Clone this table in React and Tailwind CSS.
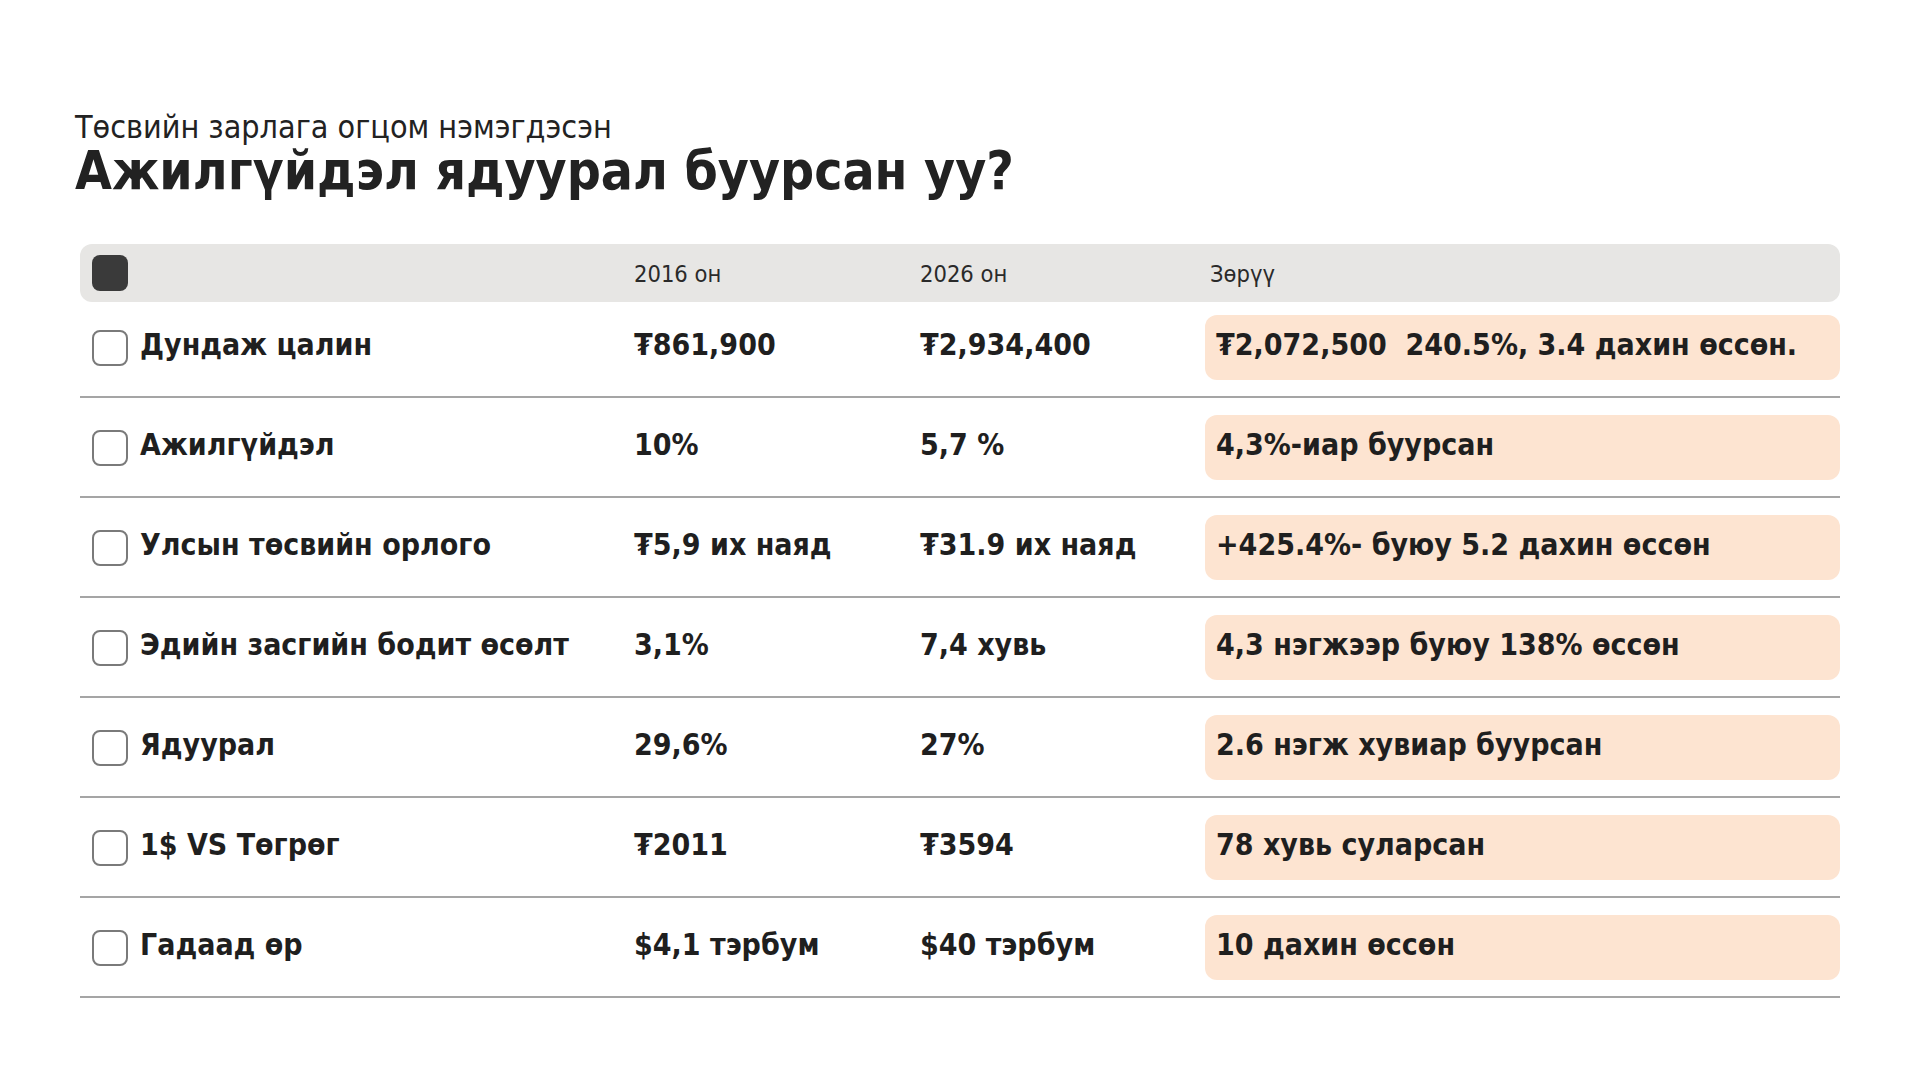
import React from 'react';

const rows = [
  { label: 'Дундаж цалин', y2016: '₮861,900', y2026: '₮2,934,400', diff: '₮2,072,500  240.5%, 3.4 дахин өссөн.' },
  { label: 'Ажилгүйдэл', y2016: '10%', y2026: '5,7 %', diff: '4,3%-иар буурсан' },
  { label: 'Улсын төсвийн орлого', y2016: '₮5,9 их наяд', y2026: '₮31.9 их наяд', diff: '+425.4%- буюу 5.2 дахин өссөн' },
  { label: 'Эдийн засгийн бодит өсөлт', y2016: '3,1%', y2026: '7,4 хувь', diff: '4,3 нэгжээр буюу 138% өссөн' },
  { label: 'Ядуурал', y2016: '29,6%', y2026: '27%', diff: '2.6 нэгж хувиар буурсан' },
  { label: '1$ VS Төгрөг', y2016: '₮2011', y2026: '₮3594', diff: '78 хувь суларсан' },
  { label: 'Гадаад өр', y2016: '$4,1 тэрбум', y2026: '$40 тэрбум', diff: '10 дахин өссөн' },
];

const font = { fontFamily: '"DejaVu Sans Condensed", "DejaVu Sans", sans-serif' };

export default function App() {
  return (
    <div className="w-[1920px] h-[1080px] bg-white text-[#1f1f1f] overflow-hidden" style={font}>
      <div className="pt-[111px] pl-[75px]">
        <p className="text-[32px] leading-none text-[#222]">Төсвийн зарлага огцом нэмэгдэсэн</p>
        <h1 className="mt-[1px] text-[53px] leading-none font-bold text-[#222]">Ажилгүйдэл ядуурал буурсан уу?</h1>
      </div>

      <div className="ml-[80px] mt-[47px] w-[1760px]">
        {/* header */}
        <div className="grid grid-cols-[542px_286px_285px_1fr] items-center h-[58px] pl-3 bg-[#e7e6e4] rounded-xl text-[23.5px] text-[#2a2a2a]">
          <div>
            <div className="w-9 h-9 rounded-lg bg-[#3a3a3a]"></div>
          </div>
          <div className="pt-[3px]">2016 он</div>
          <div className="pt-[3px]">2026 он</div>
          <div className="pt-[3px] pl-[5px]">Зөрүү</div>
        </div>

        {/* rows */}
        {rows.map((r, i) => (
          <div
            key={r.label}
            className={`grid grid-cols-[542px_286px_285px_1fr] items-center pl-3 pb-4 border-b-2 border-[#a5a5a5] text-[30px] font-bold ${
              i === 0 ? 'pt-[13px]' : 'pt-[17px]'
            }`}
          >
            <div className="flex items-center gap-3">
              <div className="w-9 h-9 rounded-lg border-2 border-[#7a7a7a] bg-white shrink-0"></div>
              <span className="pb-[7px]">{r.label}</span>
            </div>
            <div className="pb-[7px]">{r.y2016}</div>
            <div className="pb-[7px]">{r.y2026}</div>
            <div className="h-[65px] flex items-center px-[11px] pb-[7px] bg-[#fde4d1] rounded-xl whitespace-pre">{r.diff}</div>
          </div>
        ))}
      </div>
    </div>
  );
}
